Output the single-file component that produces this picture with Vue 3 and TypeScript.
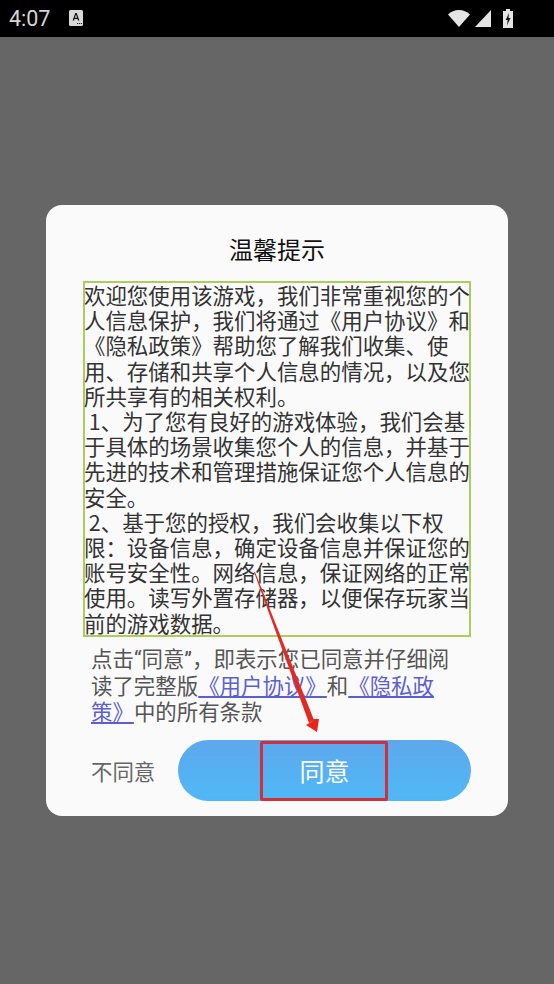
<script setup lang="ts">
const intro = '欢迎您使用该游戏，我们非常重视您的个人信息保护，我们将通过《用户协议》和《隐私政策》帮助您了解我们收集、使用、存储和共享个人信息的情况，以及您所共享有的相关权利。'
const p1 = ' 1、为了您有良好的游戏体验，我们会基于具体的场景收集您个人的信息，并基于先进的技术和管理措施保证您个人信息的安全。'
const p2 = ' 2、基于您的授权，我们会收集以下权限：设备信息，确定设备信息并保证您的账号安全性。网络信息，保证网络的正常使用。读写外置存储器，以便保存玩家当前的游戏数据。'
</script>

<template>
  <div class="screen">
    <header class="status">
      <span class="time">4:07</span>
      <svg class="a-icon" viewBox="0 0 14 16" width="14" height="16">
        <rect x="0" y="0" width="14" height="16" rx="1.5" fill="#d8d8d8" />
        <path d="M3.6 10.5 6.3 3h1.4l2.7 7.5H9l-.5-1.6h-3L5 10.5zM5.9 7.8h2.2L7 4.6z" fill="#111" />
        <path d="M8 13h1.2v1H8zM10 13h1.2v1H10zM12 13h1v1h-1z" fill="#222" />
      </svg>
      <span class="spacer"></span>
      <svg class="wifi" viewBox="0 0 22 17" width="22" height="17">
        <path d="M0 4.500C3 1.600 6.800 0 11 0s8 1.600 11 4.500L11 17z" fill="#e4e4e4" />
      </svg>
      <svg class="signal" viewBox="0 0 16 17" width="16" height="17">
        <path d="M0 17 16 0v17z" fill="#e4e4e4" />
      </svg>
      <svg class="battery" viewBox="0 0 10 19" width="10" height="19">
        <path d="M3 0h4v2h3v17H0V2h3z" fill="#e4e4e4" />
        <path d="M6 4 2.700 11h2L4 16.500 7.500 9h-2z" fill="#111" />
      </svg>
    </header>

    <main class="overlay">
      <section class="card">
        <h1 class="title">温馨提示</h1>
        <div class="terms">
          <p>{{ intro }}</p>
          <p>{{ p1 }}</p>
          <p>{{ p2 }}</p>
        </div>
        <p class="note">点击<span class="quote">“</span>同意<span class="quote">”</span>，即表示您已同意并仔细阅读了完整版<a class="link">《用户协议》</a>和<a class="link">《隐私政策》</a>中的所有条款</p>
        <div class="actions">
          <span class="refuse">不同意</span>
          <button class="agree">同意</button>
        </div>
        <div class="mark-box"></div>
        <svg class="mark-arrow" viewBox="0 0 70 165" width="70" height="165">
          <path d="M0 0 1 0 60 148 55 151z" fill="#e02a22" />
          <path d="M63 160 52 153 57 150 60 147 65 147z" fill="#e8251c" />
        </svg>
      </section>
    </main>
  </div>
</template>

<style scoped>
.screen {
  width: 554px;
  height: 984px;
  display: flex;
  flex-direction: column;
  overflow: hidden;
  font-family: "Noto Sans CJK SC", "Noto Sans", sans-serif;
  text-spacing-trim: space-all;
}
.status {
  height: 37px;
  flex: none;
  box-sizing: border-box;
  background: #000;
  display: flex;
  align-items: center;
  padding: 0 41px 0 9px;
}
.time {
  font-family: Roboto, sans-serif;
  font-size: 21.500px;
  color: #d4d4d4;
  width: 60px;
}
.a-icon { margin-top: -1px; }
.spacer { flex: 1; }
.wifi { margin-top: -1px; margin-right: 5px; }
.signal { margin-top: -1px; margin-right: 12px; }
.battery { margin-top: -1px; }
.overlay {
  flex: 1;
  background: #666;
  display: flex;
  align-items: center;
  justify-content: center;
}
.card {
  position: relative;
  width: 462px;
  height: 611px;
  box-sizing: border-box;
  background: #fafafa;
  border-radius: 16px;
  padding: 27px 37px 0;
  display: flex;
  flex-direction: column;
  align-items: center;
}
.title {
  margin: 0;
  height: 34px;
  line-height: 34px;
  font-size: 24px;
  font-weight: 400;
  color: #111;
}
.terms {
  margin-top: 15px;
  width: 388px;
  height: 356px;
  box-sizing: border-box;
  border: 2px solid #aecb5e;
  font-size: 21.44px;
  line-height: 25.2px;
  color: #333;
}
.terms p {
  margin: 0 -2px 0 -1px;
  white-space: pre-wrap;
}
.terms p:first-child {
  margin-top: -1px;
}
.note {
  margin: 8px 0 0;
  width: 370px;
  box-sizing: border-box;
  align-self: flex-start;
  padding-left: 8px;
  font-size: 21.44px;
  line-height: 25.3px;
  color: #555;
}
.quote {
  font-family: Roboto, sans-serif;
}
.link {
  color: #5b5fd6;
  text-decoration: underline;
}
.actions {
  align-self: stretch;
  margin-top: 17px;
  display: flex;
  align-items: center;
}
.refuse {
  margin-left: 8px;
  width: 64px;
  white-space: nowrap;
  font-size: 21.44px;
  color: #666;
}
.agree {
  margin-left: 23px;
  width: 293px;
  height: 61px;
  border: none;
  border-radius: 31px;
  background: linear-gradient(#5ea8ec, #4fb8f6);
  color: #fff;
  font: inherit;
  font-size: 25px;
}
.mark-box {
  position: absolute;
  left: 214px;
  top: 536px;
  width: 128px;
  height: 60px;
  box-sizing: border-box;
  border: 3px solid #d22f3b;
  border-radius: 2px;
}
.mark-arrow {
  position: absolute;
  left: 208px;
  top: 367px;
}
</style>
